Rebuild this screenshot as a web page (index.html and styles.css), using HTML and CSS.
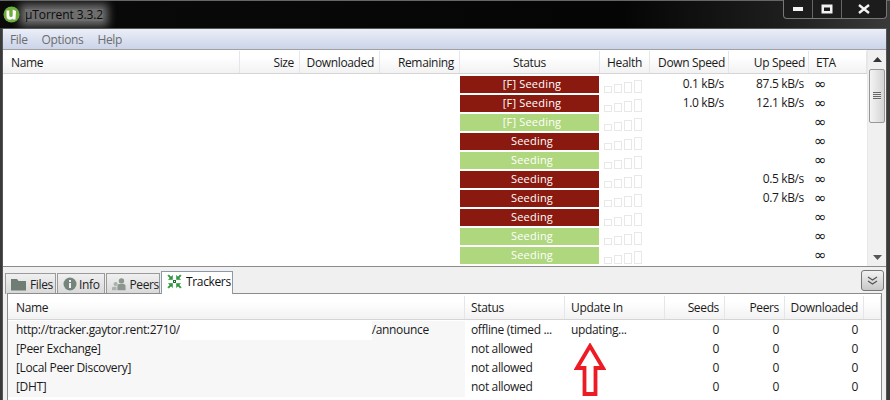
FILE: index.html
```html
<!DOCTYPE html>
<html lang="en">
<head>
  <meta charset="UTF-8">
  <title>µTorrent 3.3.2</title>
  <link rel="stylesheet" href="styles.css">
</head>
<body>
  <div class="window">
    <div class="titlebar">
      <svg class="logo" width="17" height="17" viewBox="0 0 17 17">
        <circle cx="8.5" cy="8.5" r="8" fill="#6fae3c"/>
        <path d="M3.5 4.5 L6.3 4.5 L6.3 9.5 Q6.3 11 8 11 Q9.7 11 9.7 9.5 L9.7 3.5 L13 5 L12.5 13.5 L9.7 13.5 L9.7 12.6 Q8.8 13.7 7.2 13.7 Q3.5 13.7 3.5 10 Z" fill="#fff"/>
      </svg>
      <span class="title">µTorrent 3.3.2</span>
      <div class="winbtns">
        <div class="winbtn min"><svg width="12" height="6" viewBox="0 0 12 6"><rect x="1" y="1" width="10" height="4" fill="#f2f2f2"/></svg></div>
        <div class="winbtn max"><svg width="12" height="10" viewBox="0 0 12 10"><path d="M0.5 0.5H11.5V9.5H0.5Z M3 3.5V7H9V3.5Z" fill="#f2f2f2" fill-rule="evenodd"/></svg></div>
        <div class="winbtn close"><svg width="12" height="10" viewBox="0 0 12 10"><path d="M1 1L11 9M11 1L1 9" stroke="#f2f2f2" stroke-width="2.4"/></svg></div>
      </div>
    </div>

    <div class="frame">
      <div class="menubar">
        <span>File</span>
        <span>Options</span>
        <span>Help</span>
      </div>

      <div class="torrents">
        <div class="list">
          <div class="head torrent-cols">
            <div>Name</div>
            <div class="right">Size</div>
            <div class="right">Downloaded</div>
            <div class="right">Remaining</div>
            <div class="center">Status</div>
            <div class="center">Health</div>
            <div class="right speed-head">Down Speed</div>
            <div class="right speed-head">Up Speed</div>
            <div class="eta-head">ETA</div>
          </div>
          <div class="row torrent-cols">
            <div class="status-col"><div class="status seed-dark">[F] Seeding</div></div>
            <div class="health"><i></i><i></i><i></i><i></i></div>
            <div class="right">0.1 kB/s</div><div class="right">87.5 kB/s</div><div class="eta">∞</div>
          </div>
          <div class="row torrent-cols">
            <div class="status-col"><div class="status seed-dark">[F] Seeding</div></div>
            <div class="health"><i></i><i></i><i></i><i></i></div>
            <div class="right">1.0 kB/s</div><div class="right">12.1 kB/s</div><div class="eta">∞</div>
          </div>
          <div class="row torrent-cols">
            <div class="status-col"><div class="status seed-light">[F] Seeding</div></div>
            <div class="health"><i></i><i></i><i></i><i></i></div>
            <div></div><div></div><div class="eta">∞</div>
          </div>
          <div class="row torrent-cols">
            <div class="status-col"><div class="status seed-dark">Seeding</div></div>
            <div class="health"><i></i><i></i><i></i><i></i></div>
            <div></div><div></div><div class="eta">∞</div>
          </div>
          <div class="row torrent-cols">
            <div class="status-col"><div class="status seed-light">Seeding</div></div>
            <div class="health"><i></i><i></i><i></i><i></i></div>
            <div></div><div></div><div class="eta">∞</div>
          </div>
          <div class="row torrent-cols">
            <div class="status-col"><div class="status seed-dark">Seeding</div></div>
            <div class="health"><i></i><i></i><i></i><i></i></div>
            <div></div><div class="right">0.5 kB/s</div><div class="eta">∞</div>
          </div>
          <div class="row torrent-cols">
            <div class="status-col"><div class="status seed-dark">Seeding</div></div>
            <div class="health"><i></i><i></i><i></i><i></i></div>
            <div></div><div class="right">0.7 kB/s</div><div class="eta">∞</div>
          </div>
          <div class="row torrent-cols">
            <div class="status-col"><div class="status seed-dark">Seeding</div></div>
            <div class="health"><i></i><i></i><i></i><i></i></div>
            <div></div><div></div><div class="eta">∞</div>
          </div>
          <div class="row torrent-cols">
            <div class="status-col"><div class="status seed-light">Seeding</div></div>
            <div class="health"><i></i><i></i><i></i><i></i></div>
            <div></div><div></div><div class="eta">∞</div>
          </div>
          <div class="row torrent-cols">
            <div class="status-col"><div class="status seed-light">Seeding</div></div>
            <div class="health"><i></i><i></i><i></i><i></i></div>
            <div></div><div></div><div class="eta">∞</div>
          </div>
        </div>
        <div class="scrollbar">
          <div class="sb-btn"><svg width="9" height="5" viewBox="0 0 9 5"><path d="M4.5 0L9 5H0Z" fill="#333"/></svg></div>
          <div class="sb-track">
            <div class="sb-thumb"><div class="grip"></div></div>
          </div>
          <div class="sb-btn"><svg width="9" height="5" viewBox="0 0 9 5"><path d="M4.5 5L9 0H0Z" fill="#555"/></svg></div>
        </div>
      </div>

      <div class="lower">
        <div class="tabbar">
          <div class="tab tab-files">
            <svg width="16" height="13" viewBox="0 0 16 13"><path d="M0 1H6L7.5 3H15V12.5H0Z" fill="#6f7d74"/></svg>
            Files
          </div>
          <div class="tab tab-info">
            <svg width="14" height="14" viewBox="0 0 14 14"><circle cx="7" cy="7" r="6.5" fill="#76857c"/><rect x="6" y="6" width="2" height="5" fill="#f0f0f0"/><rect x="6" y="3" width="2" height="2" fill="#f0f0f0"/></svg>
            Info
          </div>
          <div class="tab tab-peers">
            <svg width="16" height="15" viewBox="0 0 16 15"><circle cx="10.5" cy="3.5" r="3" fill="#8a968e"/><path d="M6 14V9Q6 7 8 7H13Q15 7 15 9V14Z" fill="#8a968e"/><circle cx="4" cy="7" r="2.3" fill="#a9b2ac"/><path d="M0 14V11.5Q0 10 2 10H5V14Z" fill="#a9b2ac"/></svg>
            Peers
          </div>
          <div class="tab active">
            <svg width="15" height="15" viewBox="0 0 15 15" fill="#2f9a3d" stroke="#2f9a3d" stroke-width=".6">
              <path d="M5.5 5.5V1.5L4 3L1.8 0.8L0.8 1.8L3 4L1.5 5.5Z"/>
              <path d="M9.5 5.5V1.5L11 3L13.2 0.8L14.2 1.8L12 4L13.5 5.5Z"/>
              <path d="M5.5 9.5V13.5L4 12L1.8 14.2L0.8 13.2L3 11L1.5 9.5Z"/>
              <path d="M9.5 9.5V13.5L11 12L13.2 14.2L14.2 13.2L12 11L13.5 9.5Z"/>
              <path d="M6 6H9V9H6Z M7 7V8H8V7Z" fill="#1c6a30" stroke="none" fill-rule="evenodd"/>
            </svg>
            Trackers
          </div>
          <div class="collapse">
            <svg width="11" height="9" viewBox="0 0 11 9" fill="none" stroke="#555" stroke-width="1.2"><path d="M1 1L5.5 4L10 1M1 5L5.5 8L10 5"/></svg>
          </div>
        </div>

        <div class="panel">
          <div class="head tracker-cols">
            <div>Name</div>
            <div>Status</div>
            <div>Update In</div>
            <div class="right">Seeds</div>
            <div class="right">Peers</div>
            <div class="right">Downloaded</div>
            <div></div>
          </div>
          <div class="row tracker-cols">
            <div class="sorted">http://tracker.gaytor.rent:2710/<span class="blank"></span>/announce</div>
            <div>offline (timed ...</div>
            <div>updating...</div>
            <div class="right">0</div><div class="right">0</div><div class="right">0</div><div></div>
          </div>
          <div class="row tracker-cols">
            <div class="sorted">[Peer Exchange]</div>
            <div>not allowed</div>
            <div></div>
            <div class="right">0</div><div class="right">0</div><div class="right">0</div><div></div>
          </div>
          <div class="row tracker-cols">
            <div class="sorted">[Local Peer Discovery]</div>
            <div>not allowed</div>
            <div></div>
            <div class="right">0</div><div class="right">0</div><div class="right">0</div><div></div>
          </div>
          <div class="row tracker-cols">
            <div class="sorted">[DHT]</div>
            <div>not allowed</div>
            <div></div>
            <div class="right">0</div><div class="right">0</div><div class="right">0</div><div></div>
          </div>
        </div>
      </div>
    </div>

    <svg class="red-arrow" width="32" height="54" viewBox="0 0 32 54">
      <path d="M16 3L29 25H21.5V51H10.5V25H3Z" fill="#fff" stroke="#ed1c24" stroke-width="3.8"/>
    </svg>
  </div>
</body>
</html>
```

FILE: styles.css
```css
html,body{margin:0;height:100%;overflow:hidden;}
body{
  font-family: "Open Sans", sans-serif;
  font-size: 12px;
  letter-spacing: -.35px;
  color: #1a1a1a;
  background: #000;
}
.window{
  position: relative;
  width: 890px;
  height: 400px;
  display: flex;
  flex-direction: column;
  background: #3a3a3a;
}
.titlebar{
  height: 28px;
  flex: none;
  display: flex;
  align-items: center;
  padding-left: 3px;
  box-sizing: border-box;
  background: linear-gradient(90deg, #0a0a0a 0, #050505 70%, #1e1e1e 88%, #3a3a3a 100%);
  border-top: 1px solid #666;
}
.logo{
  margin-right: 5px;
  position: relative;
  z-index: 1;
}
.title{
  font-size: 12px;
  letter-spacing: -.1px;
  line-height: 12px;
  color: #0c0c0c;
  background: #6e6e6e;
  box-shadow: 0 0 9px 5px #6e6e6e;
}
.winbtns{
  display: flex;
  align-self: flex-start;
  margin-left: auto;
  margin-right: 3px;
  height: 18px;
  margin-top: -1px;
  border: 1px solid #777;
  border-top: 0;
  border-radius: 0 0 4px 4px;
  background: #1c1c1c;
}
.winbtn{
  display: flex;
  align-items: center;
  justify-content: center;
  width: 28px;
  border-right: 1px solid #666;
}
.winbtn.close{width: 44px;border-right: 0;}

.frame{
  flex: 1;
  margin: 0 3px 0 2px;
  border: 1px solid #555;
  border-bottom: 0;
  display: flex;
  flex-direction: column;
  background: #f0f0f0;
  min-height: 0;
}
.menubar{
  height: 20px;
  flex: none;
  display: flex;
  align-items: center;
  padding-left: 7px;
  gap: 14px;
  color: #6d6d6d;
  background: linear-gradient(#eaeef7, #ccd4e9);
  border-bottom: 1px solid #a0a0a0;
}

.torrents{
  height: 216px;
  flex: none;
  display: flex;
  background: #fff;
  border-bottom: 1px solid #8c8c8c;
}
.list{width: 864px;overflow: hidden;}
.head{
  height: 24px;
  box-sizing: border-box;
  background: linear-gradient(#fff 30%, #f2f2f2);
  border-bottom: 1px solid #d5d5d5;
}
.head > div{
  display: flex;
  align-items: center;
  white-space: nowrap;
  border-right: 1px solid #e3e6ea;
}
.head .right{justify-content: flex-end;}
.head .center{justify-content: center;}
.torrent-cols{
  display: grid;
  grid-template-columns: 237px 60px 80px 80px 140px 50px 79px 80px 58px;
}
.torrents .head{margin-bottom: 1px;padding-top: 1px;}
.torrents .head > div{padding: 0 5px;box-sizing: border-box;}
.torrents .head > div:first-child{padding-left: 8px;}
.torrents .head > .speed-head{padding-right: 3px;}
.torrents .head > .eta-head{padding-left: 7px;}
.torrents .row{
  height: 19px;
  grid-template-columns: 140px 50px 79px 80px 58px;
  padding-left: 457px;
}
.row{line-height: 17px;}
.row > div{padding: 0 5px;box-sizing: border-box;white-space: nowrap;overflow: hidden;}
.right{text-align: right;}
.torrents .row > .status-col{padding: 1px 1px 1px 0;}
.status{
  height: 17px;
  line-height: 16px;
  box-sizing: border-box;
  padding-left: 5px;
  text-align: center;
  font-size: 11px;
  letter-spacing: .2px;
  color: #fff;
}
.seed-dark{background: #8a1a10;}
.seed-light{background: #afd77e;}
.torrents .row > .health{
  display: flex;
  align-items: flex-end;
  gap: 2px;
  padding: 0 0 1px 4px;
}
.health i{
  display: block;
  width: 8px;
  box-sizing: border-box;
  border: 1px solid #e8e8e8;
}
.health i:nth-child(1){height: 7px;}
.health i:nth-child(2){height: 9px;}
.health i:nth-child(3){height: 11px;}
.health i:nth-child(4){height: 13px;}
.eta{font-family: "DejaVu Sans", sans-serif;font-size: 15px;line-height: 19px;}

.scrollbar{
  width: 18px;
  display: flex;
  flex-direction: column;
  background: #f0f0f0;
  border-left: 1px solid #e8e8e8;
}
.sb-btn{
  height: 18px;
  flex: none;
  display: flex;
  align-items: center;
  justify-content: center;
}
.sb-track{flex: 1;padding: 1px 1px;}
.sb-thumb{
  height: 52px;
  display: flex;
  align-items: center;
  justify-content: center;
  border: 1px solid #979797;
  border-radius: 2px;
  background: linear-gradient(90deg, #f4f4f4, #d4d4d4);
}
.grip{
  width: 8px;
  height: 8px;
  background: repeating-linear-gradient(#666 0, #666 1px, #e8e8e8 1px, #e8e8e8 2px);
}

.lower{flex: 1;display: flex;flex-direction: column;min-height: 0;padding: 5px 2px 0 2px;}
.tabbar{
  height: 22px;
  flex: none;
  display: flex;
  align-items: flex-end;
  margin-bottom: -1px;
  gap: 1px;
}
.tab{
  height: 21px;
  box-sizing: border-box;
  display: flex;
  align-items: center;
  gap: 4px;
  padding: 0 0 0 5px;
  color: #222;
  background: linear-gradient(#f0f0f0, #d8d8d8);
  border: 1px solid #9a9a9a;
  border-bottom: 0;
}
.tab-files{width: 51px;gap: 3px;}
.tab-info{width: 48px;gap: 2px;}
.tab-peers{width: 54px;gap: 3px;}
.tab.active{
  width: 72px;
  height: 23px;
  padding: 0 0 3px 5px;
  background: #fff;
  color: #111;
  position: relative;
  z-index: 1;
  border-color: #8c9aa8;
}
.collapse{
  margin-left: auto;
  width: 21px;
  height: 19px;
  margin-bottom: 3px;
  display: flex;
  align-items: center;
  justify-content: center;
  border: 1px solid #777;
  border-radius: 3px;
  background: linear-gradient(#f2f2f2, #c8c8c8);
}
.panel{
  flex: 1;
  margin-left: 2px;
  width: 875px;
  box-sizing: border-box;
  background: #fff;
  border: 1px solid #8c8c8c;
  border-bottom: 0;
}
.tracker-cols{
  display: grid;
  grid-template-columns: 457px 100px 100px 60px 60px 79px 17px;
}
.panel .head{height: 26px;padding-top: 2px;margin-bottom: 1px;}
.panel .head > div{padding: 0 5px 0 6px;box-sizing: border-box;}
.panel .row{height: 19px;}
.panel .row > div{padding: 0 6px;}
.panel .row > div:first-child,
.panel .head > div:first-child{padding-left: 8px;}
.sorted{background: #f7f7f7;}
.blank{
  display: inline-block;
  width: 192px;
  height: 19px;
  vertical-align: top;
  background: #fff;
}
.red-arrow{
  position: absolute;
  left: 574px;
  top: 343px;
}
```
